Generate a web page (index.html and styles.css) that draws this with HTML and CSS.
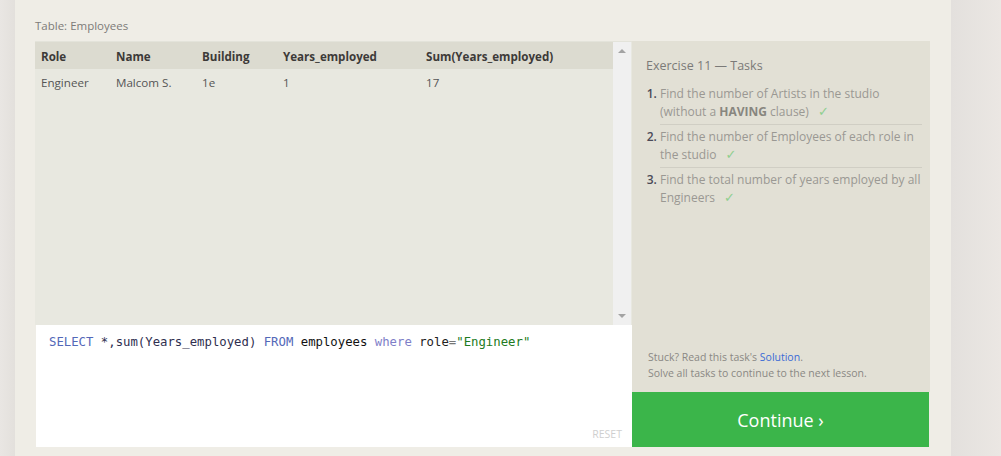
FILE: index.html
```html
<!DOCTYPE html>
<html>
<head>
<meta charset="utf-8">
<link rel="stylesheet" href="styles.css">
</head>
<body>
<div class="page">
  <div class="side-left"></div>
  <main class="panel">
    <div class="caption">Table: Employees</div>
    <div class="workspace">
      <div class="left-col">
        <div class="results">
          <div class="table">
            <div class="row head">
              <div>Role</div><div>Name</div><div>Building</div><div>Years_employed</div><div>Sum(Years_employed)</div>
            </div>
            <div class="row body">
              <div>Engineer</div><div>Malcom S.</div><div>1e</div><div>1</div><div>17</div>
            </div>
          </div>
          <div class="scrollbar">
            <span class="arrow up"></span>
            <span class="arrow down"></span>
          </div>
        </div>
        <div class="editor">
          <div class="code"><span class="kw">SELECT</span> <span class="id">*,sum(Years_employed)</span> <span class="kw">FROM</span> employees <span class="kw2">where</span> <span class="var">role</span><span class="op">=</span><span class="str">"Engineer"</span></div>
          <div class="reset">RESET</div>
        </div>
      </div>
      <div class="right-col">
        <div class="tasks">
          <div class="tasks-title">Exercise 11 — Tasks</div>
          <ol class="task-list">
            <li class="done">Find the number of Artists in the studio (without a <b>HAVING</b> clause)</li>
            <li class="done">Find the number of Employees of each role in the studio</li>
            <li class="done">Find the total number of years employed by all Engineers</li>
          </ol>
          <div class="hint">
            <div>Stuck? Read this task's <a class="link">Solution</a>.</div>
            <div>Solve all tasks to continue to the next lesson.</div>
          </div>
        </div>
        <div class="continue">Continue ›</div>
      </div>
    </div>
  </main>
  <div class="side-right"></div>
</div>
</body>
</html>
```

FILE: styles.css
```css
* { box-sizing: border-box; }
html, body { margin: 0; padding: 0; }
body {
  font-family: "Open Sans", "Liberation Sans", sans-serif;
  background: #e8e4e1;
  width: 1001px;
  height: 456px;
  overflow: hidden;
}
.page {
  display: flex;
  height: 456px;
}
.side-left {
  width: 15px;
  background: linear-gradient(to right, #e9e6e3, #e3e0dc);
}
.side-right {
  flex: 1;
  background: linear-gradient(to right, #e3e0dd, #ebe7e3);
}
.panel {
  width: 936px;
  background: #efede6;
  padding: 17px 0 0 20px;
}
.caption {
  font-size: 11.5px;
  color: #7d7b78;
  height: 24px;
  line-height: 18px;
}
.workspace {
  display: flex;
}
.left-col {
  width: 597px;
  display: flex;
  flex-direction: column;
}
.results {
  height: 284px;
  display: flex;
  background: #e8e8e0;
  border-top: 1px solid #e3e3da;
}
.table {
  flex: 1;
  font-size: 11.6px;
}
.row {
  display: grid;
  grid-template-columns: 75px 86px 81px 143px 1fr;
  padding-left: 6px;
}
.row.head {
  height: 27px;
  line-height: 27px;
  padding-top: 1px;
  background: #dcdbd0;
  font-weight: 700;
  color: #3d3a38;
}
.row.body {
  height: 26px;
  line-height: 26px;
  padding-top: 1px;
  color: #555;
}
.scrollbar {
  width: 18px;
  background: #f0f0f0;
  position: relative;
  margin-right: 1px;
}
.arrow {
  position: absolute;
  left: 5px;
  width: 0;
  height: 0;
  border-left: 4px solid transparent;
  border-right: 4px solid transparent;
}
.arrow.up {
  top: 7px;
  border-bottom: 4px solid #a3a3a3;
}
.arrow.down {
  bottom: 7px;
  border-top: 4px solid #a3a3a3;
}
.editor {
  height: 122px;
  background: #fff;
  margin-left: 1px;
  display: flex;
  flex-direction: column;
  justify-content: space-between;
  padding: 9px 10px 6px 13px;
}
.code {
  font-family: "DejaVu Sans Mono", "Liberation Mono", monospace;
  font-size: 12.3px;
  line-height: 16px;
  color: #111;
}
.kw { color: #5368b8; }
.kw2 { color: #7e7ec8; }
.id { color: #2f2f4f; }
.var { color: #222; }
.op { color: #777; }
.str { color: #217a21; }
.reset {
  align-self: flex-end;
  font-size: 10.5px;
  color: #cfcfcf;
}
.right-col {
  width: 298px;
  display: flex;
  flex-direction: column;
}
.tasks {
  height: 351px;
  background: #e2e0d5;
  padding: 16px 8px 11px 14px;
  display: flex;
  flex-direction: column;
}
.tasks-title {
  font-size: 12.5px;
  color: #7b7a78;
  line-height: 18px;
  margin-bottom: 9px;
}
.task-list {
  margin: 0;
  padding: 0 0 0 14px;
  font-size: 12px;
  line-height: 18px;
  color: #9a9893;
  flex: 1;
}
.task-list li {
  padding: 1px 0 3px;
  border-bottom: 1px solid #d0cec4;
  margin-bottom: 2px;
}
.task-list li:last-child { border-bottom: none; }
.task-list li::marker {
  color: #4a4a58;
  font-weight: 600;
}
.task-list b { color: #88867f; }
.task-list li.done::after {
  content: "✓";
  font-family: "DejaVu Sans", sans-serif;
  font-size: 13px;
  line-height: 1;
  color: #8fcf8f;
  margin-left: 9px;
}
.hint {
  font-size: 10.5px;
  line-height: 16px;
  color: #8a8884;
  padding-left: 2px;
}
.link { color: #3a6bd6; }
.continue {
  height: 55px;
  background: #3bb54a;
  color: #fff;
  font-size: 18px;
  display: flex;
  align-items: center;
  justify-content: center;
  margin-right: 1px;
}
```
